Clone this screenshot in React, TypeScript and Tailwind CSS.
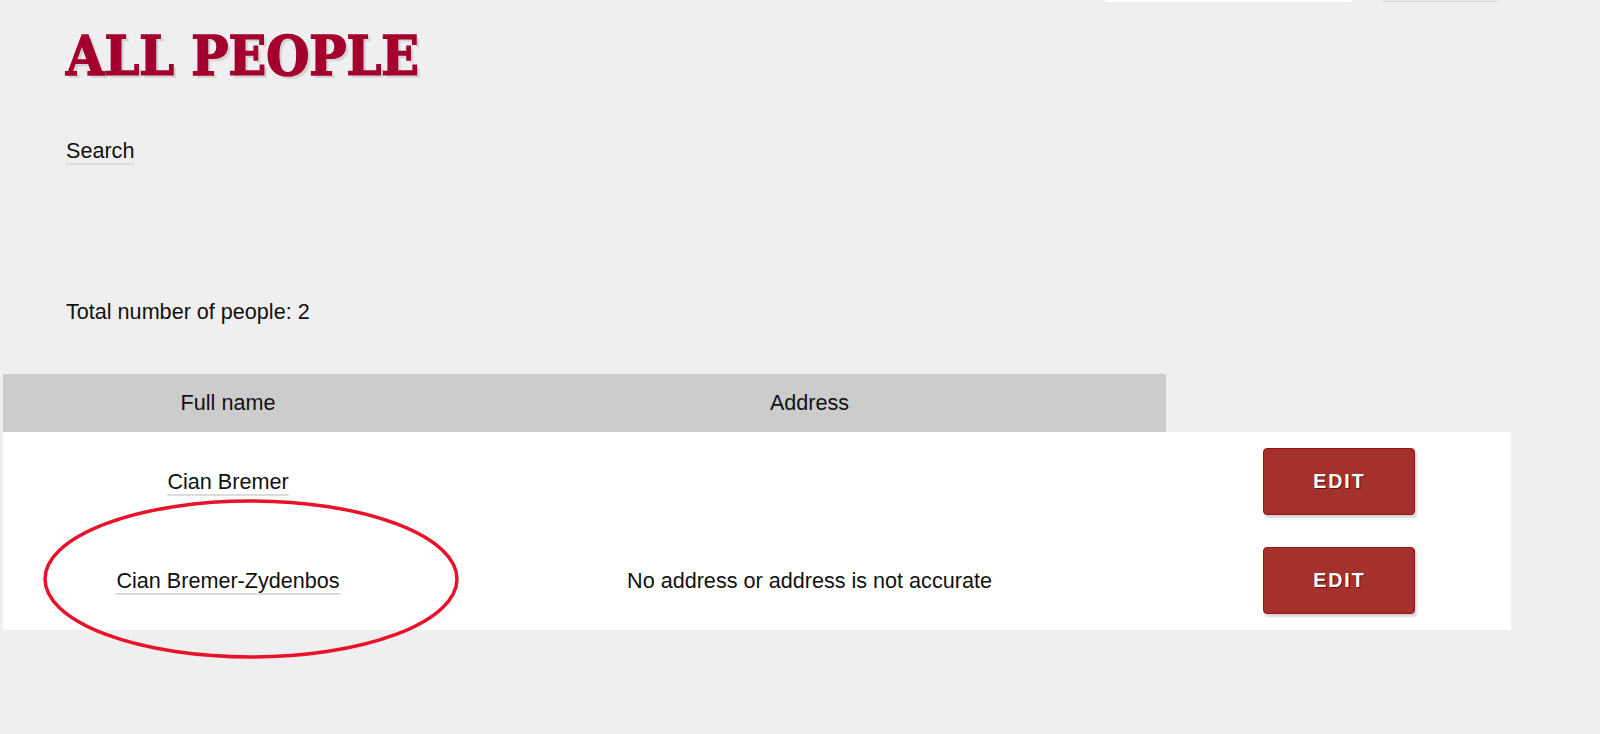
const people = [
  { name: 'Cian Bremer', address: '' },
  { name: 'Cian Bremer-Zydenbos', address: 'No address or address is not accurate' },
];

function EditButton() {
  return (
    <button
      type="button"
      className="h-[67px] w-[152px] rounded-[4px] border border-[#9a1414] bg-[#a4312b] pl-[2px] text-[19.5px] font-bold leading-none tracking-[2px] text-white shadow-[2px_3px_2px_rgba(0,0,0,0.15)] [text-shadow:1px_1px_0_#6b0d0d]"
    >
      EDIT
    </button>
  );
}

export default function App() {
  return (
    <div className="relative min-h-screen bg-[#efefef] font-['Liberation_Sans',Arial,sans-serif] text-[21.6px] text-[#111]">
      {/* search form, scrolled almost out of view */}
      <div className="flex h-[2px] items-end justify-end gap-[31px] overflow-hidden pr-[102px]">
        <div className="h-[2px] w-[247px] rounded-b-[3px] bg-white" />
        <div className="h-[1px] w-[115px] rounded-b-[2px] bg-[#d2d2d2]" />
      </div>

      <div className="pl-[66px]">
        <h1 className="mt-[26px] font-['DejaVu_Serif_Condensed','DejaVu_Serif',serif] text-[55px] font-bold leading-[56px] text-[#a4002f] [-webkit-text-stroke:1.5px_#a4002f] [text-shadow:3px_3px_0_#d4d4d4]">
          ALL PEOPLE
        </h1>

        <a
          href="#"
          className="mt-[55px] inline-block border-b-2 border-[#dcdcdc] leading-[24px] text-[#111]"
        >
          Search
        </a>

        <p className="mt-[133px] leading-[24px]">Total number of people: 2</p>
      </div>

      <div className="mt-[50px] pl-[3px]">
        <table className="w-[1508px] table-fixed border-collapse">
          <colgroup>
            <col className="w-[450px]" />
            <col className="w-[713px]" />
            <col className="w-[345px]" />
          </colgroup>
          <thead>
            <tr className="h-[58px]">
              <th className="bg-[#cccccc] text-center font-normal leading-[24px]">Full name</th>
              <th className="bg-[#cccccc] text-center font-normal leading-[24px]">Address</th>
              <th />
            </tr>
          </thead>
          <tbody className="bg-white">
            {people.map((p) => (
              <tr key={p.name} className="h-[99px]">
                <td className="text-center align-middle">
                  <a
                    href="#"
                    className="inline-block border-b-2 border-[#dcdcdc] leading-[24px] text-[#111]"
                  >
                    {p.name}
                  </a>
                </td>
                <td className="text-center align-middle leading-[24px]">{p.address}</td>
                <td className="text-center align-middle">
                  <div className="flex justify-center">
                    <EditButton />
                  </div>
                </td>
              </tr>
            ))}
          </tbody>
        </table>
      </div>

      {/* red annotation circle */}
      <svg
        className="pointer-events-none absolute left-[43px] top-[499px] h-[160px] w-[416px]"
        viewBox="0 0 416 160"
      >
        <ellipse cx="208" cy="80" rx="206" ry="78" fill="none" stroke="#e8132b" strokeWidth="3.5" />
      </svg>
    </div>
  );
}
